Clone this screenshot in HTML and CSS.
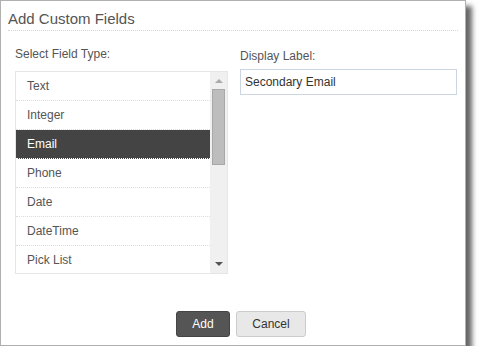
FILE: index.html
```html
<!DOCTYPE html>
<html>
<head>
<meta charset="utf-8">
<link rel="stylesheet" href="styles.css">
</head>
<body>
<div class="dialog">
  <div class="dialog-title">Add Custom Fields</div>
  <div class="dialog-body">
    <div class="col col-left">
      <div class="label">Select Field Type:</div>
      <div class="listbox">
        <ul class="items">
          <li>Text</li>
          <li>Integer</li>
          <li class="selected">Email</li>
          <li>Phone</li>
          <li>Date</li>
          <li>DateTime</li>
          <li>Pick List</li>
        </ul>
        <div class="scrollbar">
          <div class="arrow arrow-up"></div>
          <div class="track"><div class="thumb"></div></div>
          <div class="arrow arrow-down"></div>
        </div>
      </div>
    </div>
    <div class="col col-right">
      <div class="label label-right">Display Label:</div>
      <div class="input">Secondary Email</div>
    </div>
  </div>
  <div class="dialog-footer">
    <button class="btn btn-primary">Add</button>
    <button class="btn btn-default">Cancel</button>
  </div>
</div>
</body>
</html>
```
FILE: styles.css
```css
* { box-sizing: border-box; }
html, body { margin: 0; padding: 0; background: #fff; }
body { font-family: "Liberation Sans", Arial, sans-serif; color: #555; }

.dialog {
  width: 466px;
  height: 346px;
  border: 1px solid #b0b0b0;
  background: #fff;
  box-shadow: 6px 6px 5px rgba(0,0,0,0.6);
  display: flex;
  flex-direction: column;
}

.dialog-title {
  margin: 0 7px;
  padding: 10px 0 3px 0;
  font-size: 15px;
  line-height: 16px;
  color: #555;
  border-bottom: 1px dotted #d4d4d4;
}

.dialog-body {
  display: flex;
  gap: 12px;
  padding: 16px 8px 0 14px;
  flex: 1;
}

.col-left { width: 213px; }
.col-right { width: 217px; }

.label {
  font-size: 12px;
  line-height: 14px;
  color: #555;
  margin-bottom: 10px;
}
.label-right { margin-top: 2px; margin-bottom: 6px; }

.listbox {
  display: flex;
  height: 203px;
  border: 1px solid #e6e6e6;
  overflow: hidden;
}

.items {
  list-style: none;
  margin: 0;
  padding: 0;
  flex: 1;
}
.items li {
  height: 29px;
  line-height: 28px;
  padding-left: 11px;
  font-size: 12px;
  color: #555;
  border-bottom: 1px dotted #dcdcdc;
}
.items li.selected {
  background: #444;
  color: #fff;
  border-bottom-color: #fff;
}

.scrollbar {
  width: 17px;
  background: #f0f0f0;
  display: flex;
  flex-direction: column;
  align-items: center;
}
.arrow {
  width: 0; height: 0;
  border-left: 4px solid transparent;
  border-right: 4px solid transparent;
}
.arrow-up { border-bottom: 4px solid #aaa; margin-top: 7px; }
.arrow-down { border-top: 4px solid #555; margin-bottom: 7px; }
.track { flex: 1; width: 100%; padding: 6px 3px 0 2px; }
.thumb {
  width: 13px;
  height: 76px;
  background: #bdbdbd;
  border: 1px solid #a8a8a8;
}

.input {
  height: 26px;
  border: 1px solid #ccd5e2;
  font-size: 12px;
  line-height: 24px;
  padding-left: 4px;
  color: #333;
}

.dialog-footer {
  display: flex;
  justify-content: center;
  gap: 6px;
  padding: 0 0 8px 16px;
}
.btn {
  font-family: "Liberation Sans", Arial, sans-serif;
  font-size: 12px;
  height: 26px;
  border-radius: 3px;
  padding: 0;
}
.btn-primary {
  width: 54px;
  background: #555;
  border: 1px solid #444;
  color: #fff;
}
.btn-default {
  width: 70px;
  background: #e8e8e8;
  border: 1px solid #ccc;
  color: #333;
}
```
